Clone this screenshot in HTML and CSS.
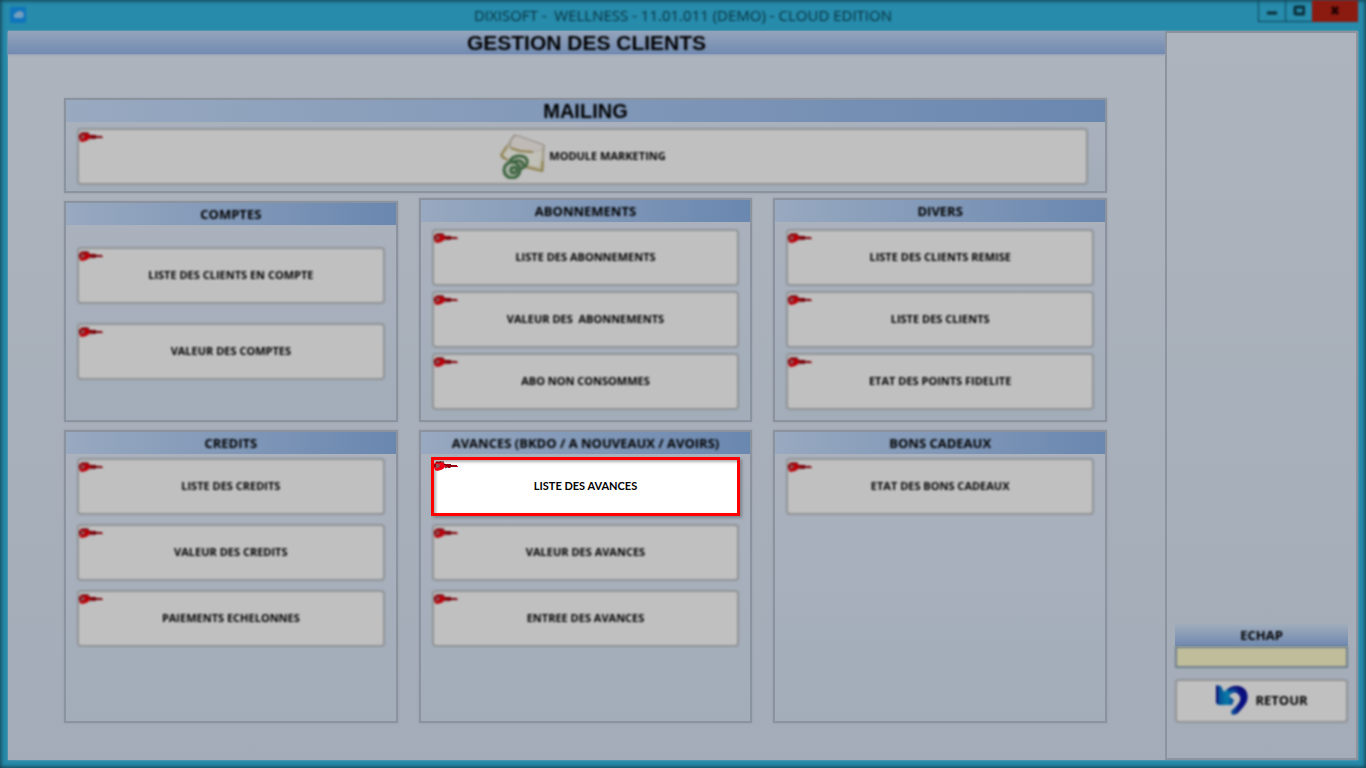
FILE: index.html
```html
<!DOCTYPE html>
<html lang="fr">
<head>
  <meta charset="UTF-8">
  <meta name="viewport" content="width=device-width, initial-scale=1.0">
  <title>Gestion des clients</title>
  <link rel="stylesheet" href="styles.css">
</head>
<body>
  <svg class="sprite" aria-hidden="true">
    <symbol id="key" viewBox="0 0 24 10">
      <path d="M2 1h6l2 1 1 1h6v1h6v1h1v1h-8v1h-2v-1h-3l-2 2-2 1-4 1-2-1-1-3V3z" fill="currentColor"/>
      <path d="M2 1h5v-1M8 1h2M1 3v3M10 3l1 1h6v1h6M13 6h4M11 7l2-1" fill="none" stroke="#400008" stroke-width="1"/>
      <path d="M2 3h3l1 2-2 2H2z" fill="#8d5458"/>
    </symbol>
  </svg>

  <div class="window">
    <header class="titlebar">
      <svg class="app-icon soft" viewBox="0 0 16 16" aria-hidden="true">
        <rect width="16" height="16" rx="1" fill="#0f76bd"/>
        <path d="M4 10V7l3-2 2-1 4 1 1 4-2 2H5z" fill="#719fc0"/>
        <path d="M7 6l3-1 2 2" fill="none" stroke="#a0a0a8"/>
      </svg>
      <div class="app-title soft">DIXISOFT -&nbsp; WELLNESS - 11.01.011 (DEMO) - CLOUD EDITION</div>
      <div class="window-controls soft">
        <button class="control" aria-label="Réduire"><svg viewBox="0 0 12 12"><path d="M1 8h10" stroke="#0b2e38" stroke-width="3"/></svg></button>
        <button class="control" aria-label="Agrandir"><svg viewBox="0 0 12 12"><rect x="2" y="2" width="9" height="7" rx="1" fill="none" stroke="#0b2e38" stroke-width="3"/></svg></button>
        <button class="control close" aria-label="Fermer"><svg viewBox="0 0 12 12"><path d="M3 2l6 7M9 2L3 9" stroke="#250303" stroke-width="3"/></svg></button>
      </div>
    </header>

    <div class="content">
      <main class="main">
        <div class="page-title"><h1 class="soft">GESTION DES CLIENTS</h1></div>

        <div class="panels">
          <section class="panel mailing">
            <h2><span class="soft">MAILING</span></h2>
            <div class="panel-body">
              <button class="btn soft">
                <svg class="key"><use href="#key"/></svg>
                <svg class="mail-icon" viewBox="0 0 46 46" aria-hidden="true">
                  <path d="M15 2L45 12L44 38L24 33L3 25L2 22z" fill="#b5b09c" stroke="#8f8872"/>
                  <path d="M12 7L17 2L45 12L44 17L32 20L11 15z" fill="#c0bab6" stroke="#918a85"/>
                  <path d="M10 15L32 20L43 17L40 34L20 30L4 23z" fill="#c2c1b9"/>
                  <path d="M8 13L2 22L8 27M12 15l8 3 14 1M26 34l17 4 1-10" fill="none" stroke="#8f8250" stroke-width="2"/>
                  <circle cx="13" cy="37" r="8" fill="#a9b3a6" stroke="#3f6642" stroke-width="3"/>
                  <path d="M12 36c5-5 9 2 3 4-4 0-4-4-1-6M11 28c3-6 14-7 17-1 1 5-3 8-7 9M14 29c5-3 11-1 10 4" fill="none" stroke="#3f6642" stroke-width="3"/>
                </svg>
                MODULE MARKETING
              </button>
            </div>
          </section>

          <section class="panel comptes">
            <h2><span class="soft">COMPTES</span></h2>
            <div class="panel-body">
              <button class="btn soft"><svg class="key"><use href="#key"/></svg>LISTE DES CLIENTS EN COMPTE</button>
              <button class="btn soft"><svg class="key"><use href="#key"/></svg>VALEUR DES COMPTES</button>
            </div>
          </section>

          <section class="panel">
            <h2><span class="soft">ABONNEMENTS</span></h2>
            <div class="panel-body">
              <button class="btn soft"><svg class="key"><use href="#key"/></svg>LISTE DES ABONNEMENTS</button>
              <button class="btn soft"><svg class="key"><use href="#key"/></svg>VALEUR DES&nbsp; ABONNEMENTS</button>
              <button class="btn soft"><svg class="key"><use href="#key"/></svg>ABO NON CONSOMMES</button>
            </div>
          </section>

          <section class="panel">
            <h2><span class="soft">DIVERS</span></h2>
            <div class="panel-body">
              <button class="btn soft"><svg class="key"><use href="#key"/></svg>LISTE DES CLIENTS REMISE</button>
              <button class="btn soft"><svg class="key"><use href="#key"/></svg>LISTE DES CLIENTS</button>
              <button class="btn soft"><svg class="key"><use href="#key"/></svg>ETAT DES POINTS FIDELITE</button>
            </div>
          </section>

          <section class="panel lower">
            <h2><span class="soft">CREDITS</span></h2>
            <div class="panel-body">
              <button class="btn soft"><svg class="key"><use href="#key"/></svg>LISTE DES CREDITS</button>
              <button class="btn soft"><svg class="key"><use href="#key"/></svg>VALEUR DES CREDITS</button>
              <button class="btn soft"><svg class="key"><use href="#key"/></svg>PAIEMENTS ECHELONNES</button>
            </div>
          </section>

          <section class="panel lower">
            <h2><span class="soft">AVANCES (BKDO / A NOUVEAUX / AVOIRS)</span></h2>
            <div class="panel-body">
              <button class="btn active"><svg class="key"><use href="#key"/></svg>LISTE DES AVANCES</button>
              <button class="btn soft"><svg class="key"><use href="#key"/></svg>VALEUR DES AVANCES</button>
              <button class="btn soft"><svg class="key"><use href="#key"/></svg>ENTREE DES AVANCES</button>
            </div>
          </section>

          <section class="panel lower">
            <h2><span class="soft">BONS CADEAUX</span></h2>
            <div class="panel-body">
              <button class="btn soft"><svg class="key"><use href="#key"/></svg>ETAT DES BONS CADEAUX</button>
            </div>
          </section>
        </div>
      </main>

      <aside class="sidebar">
        <label for="echap"><span class="soft">ECHAP</span></label>
        <input class="soft" type="text" id="echap">
        <button class="btn back soft">
          <svg class="back-icon" viewBox="0 0 34 32" aria-hidden="true">
            <defs>
              <linearGradient id="arrow" x1="0" y1="0" x2="1" y2="0">
                <stop offset="0" stop-color="#07408f"/>
                <stop offset="0.35" stop-color="#087ba8"/>
                <stop offset="0.75" stop-color="#0a1080"/>
              </linearGradient>
            </defs>
            <path d="M1 1L6 2L9 8C16 0 29 0 32 9C35 18 27 24 22 30L17 31L16 27C22 22 28 16 24 11C21 7 17 8 14 12L19 16L17 21L3 21L1 19Z" fill="url(#arrow)"/>
            <path d="M2 2v17M13 6c7-6 15-3 17 3" fill="none" stroke="#0a0870" stroke-width="2"/>
          </svg>
          RETOUR
        </button>
      </aside>
    </div>
  </div>
</body>
</html>
```
FILE: styles.css
```css
* {
  box-sizing: border-box;
}

body {
  margin: 0;
  font-family: "Open Sans", "Noto Sans", sans-serif;
  color: #000;
}

button {
  font-family: inherit;
  color: inherit;
  cursor: pointer;
}

.sprite {
  display: none;
}

.soft {
  filter: blur(1px);
}

.window {
  display: flex;
  flex-direction: column;
  min-height: 100vh;
  padding: 0 8px 8px;
  background-color: #278bab;
  box-shadow: inset 0 0 4px 1px #123f4e;
}

/* title bar */
.titlebar {
  display: flex;
  align-items: flex-start;
  height: 31px;
  padding-left: 2px;
}

.app-icon {
  width: 16px;
  height: 16px;
  margin-top: 7px;
}

.app-title {
  flex: 1;
  padding-left: 82px;
  font-size: 15px;
  line-height: 31px;
  text-align: center;
  color: #06303d;
}

.window-controls {
  display: flex;
}

.control {
  display: flex;
  justify-content: center;
  align-items: center;
  width: 27px;
  height: 22px;
  padding: 0;
  border: 1px solid #0d4658;
  border-top: none;
  border-right: none;
  background: none;
}

.control svg {
  width: 12px;
  height: 12px;
}

.control.close {
  width: 46px;
  border: none;
  background-color: #8b1a10;
}

/* content */
.content {
  display: flex;
  flex: 1;
  background: linear-gradient(to bottom, #adb4bd, #a3acb8);
  box-shadow: 0 0 2px #8fa9b5;
}

.main {
  display: flex;
  flex-direction: column;
  flex: 1;
}

.page-title {
  height: 23px;
  background: linear-gradient(to bottom, #94a4bb, #728bb2);
  box-shadow: 0 1px 2px #8b9bb8;
}

.page-title h1 {
  margin: 0;
  font-family: "Liberation Sans", Arial, sans-serif;
  font-size: 21px;
  line-height: 23px;
  text-align: center;
}

.panels {
  display: grid;
  grid-template-columns: repeat(3, 1fr);
  grid-template-rows: auto auto 1fr;
  column-gap: 21px;
  flex: 1;
  padding: 44px 58px 37px 56px;
}

.panel {
  border: 2px solid #8b939f;
  background: linear-gradient(to bottom, #abb2be, #a2adb9);
  box-shadow: 0 0 2px #959da8;
  margin-bottom: 8px;
}

.panel h2 {
  margin: 0;
  font-size: 13px;
  line-height: 22px;
  text-align: center;
  background: linear-gradient(to right, #98a9c0, #6a87b0);
}

.panel h2 span {
  display: block;
}

.panel-body {
  display: flex;
  flex-direction: column;
  gap: 5px;
  padding: 7px 11px 10px;
}

.mailing {
  grid-column: 1 / -1;
  margin-bottom: 5px;
}

.mailing h2 {
  font-family: "Liberation Sans", Arial, sans-serif;
  font-size: 20px;
}

.mailing .panel-body {
  padding: 6px 17px 6px 11px;
}

.comptes {
  margin-top: 3px;
}

.comptes .panel-body {
  gap: 19px;
  padding-top: 22px;
}

.lower {
  margin-bottom: 0;
}

.lower .panel-body {
  gap: 9px;
  padding-top: 4px;
}

/* buttons */
.btn {
  position: relative;
  display: flex;
  justify-content: center;
  align-items: center;
  height: 57px;
  padding: 0 0 2px;
  border: 2px solid #909396;
  border-radius: 4px;
  background-color: #c0c0c0;
  font-size: 11px;
  font-weight: bold;
}

.btn.active {
  height: 59px;
  margin: -1px;
  border: 3px solid #ff0000;
  border-radius: 0;
  background-color: #fff;
  box-shadow: inset 2px 2px 3px #b0b0b0, 2px 2px 3px #7c838c;
  font-family: Lato, sans-serif;
}

.key {
  position: absolute;
  top: 2px;
  left: 0;
  width: 24px;
  height: 10px;
  color: #b80008;
}

.btn.active .key {
  top: 1px;
  color: #f00014;
}

.mail-icon {
  width: 46px;
  height: 46px;
  margin-right: 4px;
}

/* sidebar */
.sidebar {
  display: flex;
  flex-direction: column;
  justify-content: flex-end;
  width: 193px;
  padding: 0 8px 35px;
  border: 2px solid #8b949e;
}

.sidebar label {
  font-size: 13px;
  font-weight: bold;
  line-height: 22px;
  text-align: center;
  background: linear-gradient(to bottom, #a0adbb, #7089b1);
}

.sidebar label span {
  display: block;
}

.sidebar input {
  width: 100%;
  height: 22px;
  margin-bottom: 11px;
  border: 2px solid #70808a;
  background-color: #c0be9a;
}

.btn.back {
  height: 44px;
  gap: 6px;
  font-size: 13px;
}

.back-icon {
  width: 34px;
  height: 32px;
}
```
